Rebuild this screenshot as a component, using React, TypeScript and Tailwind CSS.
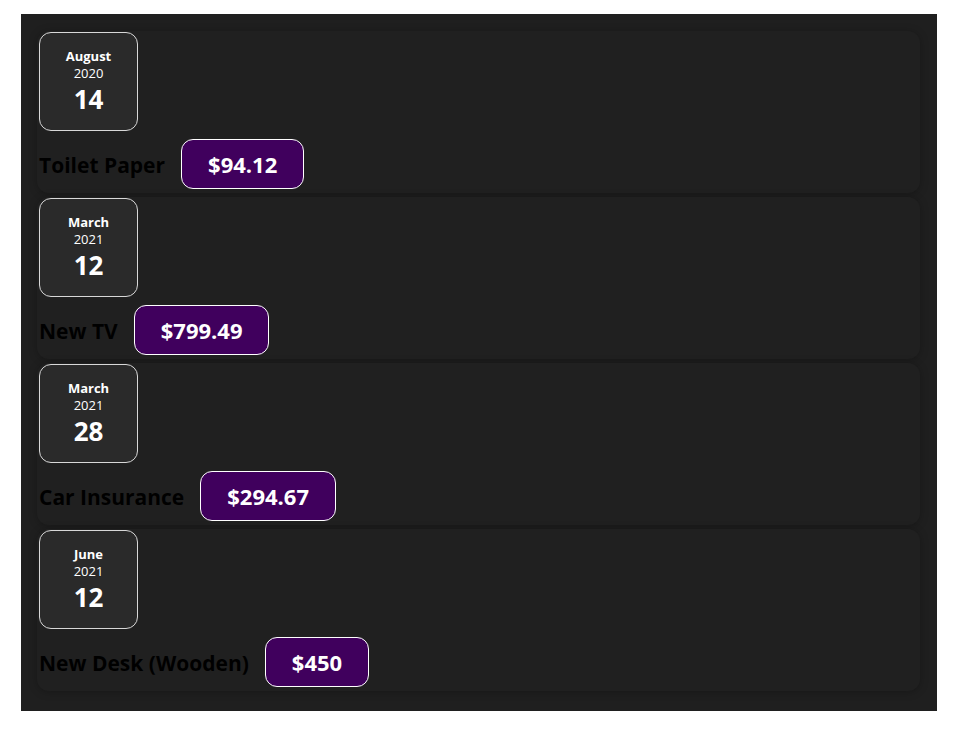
import React from "react";

const items = [
  { month: "August", year: "2020", day: "14", title: "Toilet Paper", price: "$94.12" },
  { month: "March", year: "2021", day: "12", title: "New TV", price: "$799.49" },
  { month: "March", year: "2021", day: "28", title: "Car Insurance", price: "$294.67" },
  { month: "June", year: "2021", day: "12", title: "New Desk (Wooden)", price: "$450" },
];

export default function App() {
  return (
    <div className="min-h-[737px] bg-white pt-[14px]" style={{ fontFamily: '"Open Sans", "Noto Sans", sans-serif' }}>
      <div className="mx-[21px] w-[916px] bg-[#1f1f1f] pt-[17px] pb-[20px] pl-[16px] pr-[17px] flex flex-col gap-[4px]">
        {items.map((it) => (
          <div
            key={it.title}
            className="h-[162px] rounded-[12px] bg-[#202020] shadow-[0_1px_8px_rgba(0,0,0,0.25)] pt-[1px] pl-[2px] flex flex-col"
          >
            <div className="w-[99px] h-[99px] rounded-[12px] border border-[#d8d8d8] bg-[#2a2a2a] text-white flex flex-col items-center justify-center">
              <div className="text-[13px] font-bold leading-[17px]">{it.month}</div>
              <div className="text-[13px] leading-[17px]">{it.year}</div>
              <div className="text-[26px] font-bold leading-[32px] mt-[1px]">{it.day}</div>
            </div>
            <div className="flex items-center mt-[8px]">
              <h2 className="text-[21px] font-bold text-black mr-[16px] pt-[3px]">{it.title}</h2>
              <div className="h-[50px] px-[26px] rounded-[12px] border border-white bg-[#40005d] text-white text-[22px] font-bold flex items-center">
                {it.price}
              </div>
            </div>
          </div>
        ))}
      </div>
    </div>
  );
}
